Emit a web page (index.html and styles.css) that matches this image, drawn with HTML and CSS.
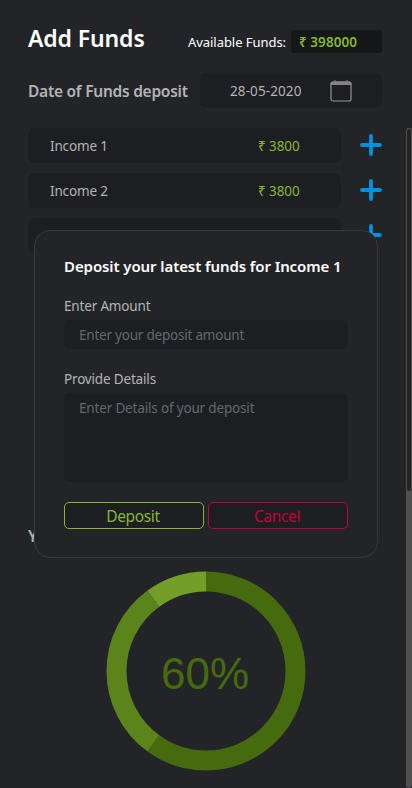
FILE: index.html
```
<!DOCTYPE html>
<html lang="en">
<head>
<meta charset="utf-8">
<title>Add Funds</title>
<link rel="stylesheet" href="styles.css">
</head>
<body>
<main class="page">
  <header class="head">
    <h1>Add Funds</h1>
    <span class="avail">Available Funds:</span>
    <span class="balance">₹ 398000</span>
  </header>
  <section class="date-row">
    <h2>Date of Funds deposit</h2>
    <div class="date"><span>28-05-2020</span>
      <svg width="22" height="22" viewBox="0 0 22 22"><rect x="1" y="2" width="20" height="19" rx="2" fill="none" stroke="#939393" stroke-width="1.2"/><path d="M.5 5V3.5a2 2 0 0 1 2-2h17a2 2 0 0 1 2 2V5z" fill="#858585"/><path d="M5 0v2M17 0v2" stroke="#858585"/></svg>
    </div>
  </section>
  <section class="list">
    <div class="row"><div class="item"><span>Income 1</span><b>₹ 3800</b></div><svg class="plus" viewBox="0 0 22 22"><path d="M11 2v18M2 11h18"/></svg></div>
    <div class="row"><div class="item"><span>Income 2</span><b>₹ 3800</b></div><svg class="plus" viewBox="0 0 22 22"><path d="M11 2v18M2 11h18"/></svg></div>
    <div class="row"><div class="item"><span>Income 3</span><b>₹ 3800</b></div><svg class="plus" viewBox="0 0 22 22"><path d="M11 2v18M2 11h18"/></svg></div>
  </section>
  <h2 class="chart-title">Your Funds</h2>
  <svg class="ring" width="200" height="200" viewBox="0 0 200 200">
    <g fill="none" stroke-width="20" transform="rotate(-90 100 100)">
      <circle cx="100" cy="100" r="89.5" pathLength="100" stroke="#456b0e" stroke-dasharray="60 40"/>
      <circle cx="100" cy="100" r="89.5" pathLength="100" stroke="#5b851b" stroke-dasharray="30 70" stroke-dashoffset="-60"/>
      <circle cx="100" cy="100" r="89.5" pathLength="100" stroke="#739f28" stroke-dasharray="10 90" stroke-dashoffset="-90"/>
    </g>
    <text x="99" y="118" text-anchor="middle">60%</text>
  </svg>
</main>
<div class="track"><div class="thumb"></div></div>
<div class="modal">
  <h3>Deposit your latest funds for Income 1</h3>
  <label>Enter Amount</label>
  <div class="field">Enter your deposit amount</div>
  <label class="second">Provide Details</label>
  <div class="field area">Enter Details of your deposit</div>
  <div class="actions"><button class="ok">Deposit</button><button class="no">Cancel</button></div>
</div>
</body>
</html>
```
FILE: styles.css
```
* { box-sizing: border-box; }
body {
  margin: 0;
  height: 788px;
  overflow: hidden;
  position: relative;
  background: #232428;
  color: #b4b4b4;
  font: 14px/20px "Noto Sans", "Open Sans", sans-serif;
  white-space: nowrap;
}
h1, h2, h3 { margin: 0; }
.page { padding: 24px 30px 0 28px; }
.head { display: flex; height: 34px; }
h1 { width: 160px; font-size: 23px; font-weight: 600; line-height: 29px; color: #fff; letter-spacing: -.12px; }
.avail { width: 103px; padding-top: 8px; font-size: 13px; color: #fff; letter-spacing: -.05px; }
.balance {
  width: 91px; height: 23px; margin-top: 6px; padding-left: 8px;
  border-radius: 3px; background: #161718; color: #86b636;
  font-size: 13.5px; font-weight: 600; line-height: 24px; letter-spacing: .05px;
}
.date-row { display: flex; margin-top: 15px; height: 35px; }
.date-row h2 { width: 172px; font-size: 15.5px; font-weight: 600; line-height: 37px; letter-spacing: -.25px; }
.date {
  display: flex; align-items: center; justify-content: space-between;
  width: 182px; padding: 0 30px; border-radius: 7px; background: #1d1e21;
  font-size: 13.5px; letter-spacing: .1px;
}
.list { display: flex; flex-direction: column; gap: 10px; margin-top: 20px; }
.row { display: flex; align-items: center; height: 35px; }
.item {
  display: flex; width: 313px; height: 35px; padding: 0 22px;
  border-radius: 7px; background: #1d1e21; line-height: 36px; font-size: 13.5px;
}
.item span { width: 208px; letter-spacing: -.15px; }
.item b { font-weight: 400; color: #86b636; letter-spacing: -.1px; }
.plus { width: 22px; height: 22px; margin: 0 0 1px 19.5px; fill: none; stroke: #0092df; stroke-width: 3.8; stroke-linecap: round; }
.chart-title { margin-top: 271px; font-size: 15.5px; font-weight: 600; line-height: 24px; }
.ring { display: block; margin: 23px 0 0 78px; }
.ring text { font: 44px "Liberation Sans", sans-serif; fill: #456b0e; }
.track { position: absolute; right: 0; top: 128px; width: 6px; bottom: 0; background: #505050; border-radius: 3px; }
.thumb { width: 6px; height: 364px; border: 1px solid #505050; border-radius: 3px; background: #222325; }
.modal {
  position: absolute; left: 34px; top: 230px; width: 344px; height: 328px;
  padding: 24px 29px 0; border: 1px solid #38393b; border-radius: 16px; background: #232428;
}
.modal h3 { height: 24px; font-size: 15px; line-height: 22px; font-weight: 600; color: #fff; letter-spacing: -.09px; }
label { display: block; margin-top: 17px; height: 20px; font-size: 13.5px; letter-spacing: -.17px; }
.field {
  height: 29px; margin-top: 4px; padding-left: 15px; border-radius: 6px;
  background: #1d1e21; color: #66676a; font-size: 13.5px; line-height: 30px; letter-spacing: -.22px;
}
label.second { margin-top: 20px; }
.area { height: 89px; letter-spacing: -.17px; }
.actions { display: flex; gap: 4px; margin-top: 20px; }
button {
  width: 140px; height: 27px; padding: 0 2px 0 0; border: 1px solid; border-radius: 5px;
  background: #1d1e21; font: 15.5px/26px "Noto Sans", "Open Sans", sans-serif; letter-spacing: -.35px;
}
.ok { color: #86b636; }
.no { color: #c50038; }
```
